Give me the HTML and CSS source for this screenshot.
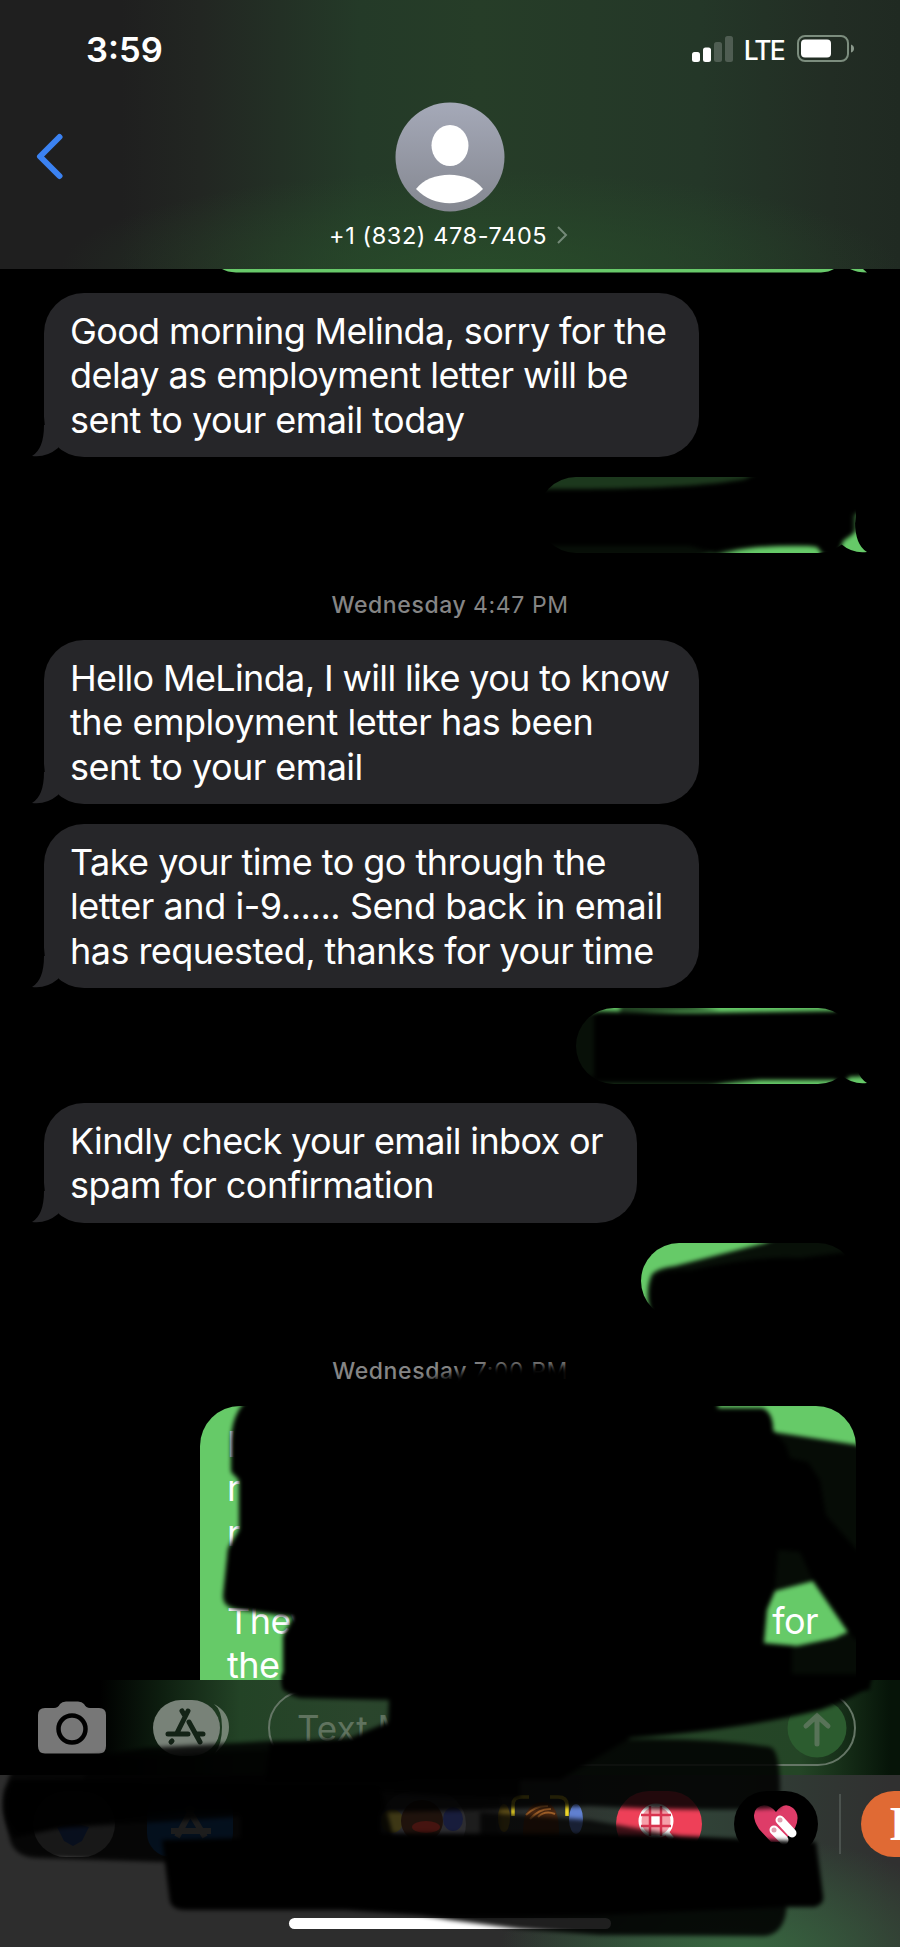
FILE: index.html
```
<!DOCTYPE html>
<html lang="en">
<head>
  <meta charset="UTF-8" />
  <meta name="viewport" content="width=device-width, initial-scale=1" />
  <title>Messages</title>
  <link rel="stylesheet" href="styles.css">
</head>
<body>
  <div class="phone">

    <!-- Header -->
    <header class="header">
      <div class="status">
        <span class="time">3:59</span>
        <div class="status-right">
          <svg width="42" height="28" viewBox="0 0 42 28" fill="#fff">
            <rect x="0" y="17" width="8" height="10" rx="2.5"/>
            <rect x="11" y="12.500" width="8" height="14.500" rx="2.500"/>
            <rect x="22" y="7" width="8" height="20" rx="2.500" opacity=".2"/>
            <rect x="33" y="1" width="8" height="26" rx="2.500" opacity=".2"/>
          </svg>
          <span class="lte">LTE</span>
          <svg width="58" height="28" viewBox="0 0 58 28">
            <rect x="1" y="1" width="50" height="25" rx="7" fill="none" stroke="#7c8d7e" stroke-width="2"/>
            <rect x="4" y="4.500" width="30" height="18" rx="4" fill="#fff"/>
            <path d="M54 9.500q3 1 3 4t-3 4z" fill="#8a988b"/>
          </svg>
        </div>
      </div>
      <div class="contact">
        <svg class="back" width="28" height="48" viewBox="0 0 28 48">
          <path d="M23.500 4 4 23.500 23.500 43" fill="none" stroke="#3b82f2" stroke-width="6" stroke-linecap="round" stroke-linejoin="round"/>
        </svg>
        <svg class="avatar" width="110" height="110" viewBox="0 0 110 110">
          <defs>
            <linearGradient id="av" x1="0" y1="0" x2="0" y2="1">
              <stop offset="0" stop-color="#a5a9b8"/><stop offset="1" stop-color="#848790"/>
            </linearGradient>
          </defs>
          <circle cx="55" cy="55" r="54.500" fill="url(#av)"/>
          <ellipse cx="55" cy="43.500" rx="18.500" ry="20.500" fill="#fff"/>
          <path d="M21 87C35 68 74 68 88 87 70 106 39 106 21 87z" fill="#fff"/>
        </svg>
      </div>
      <div class="number">
        <span>+1 (832) 478-7405</span>
        <svg width="12" height="20" viewBox="0 0 12 20"><path d="M2 2l8 8-8 8" fill="none" stroke="#748a78" stroke-width="2"/></svg>
      </div>
    </header>

    <!-- Conversation -->
    <main class="chat">
      <div class="sent-edge">
        <svg width="650" height="4" viewBox="0 0 650 4" fill="#68c96a">
          <path d="M0 0H612Q607 3 599 3.500H14Q5 3 0 0z"/><path d="M628 0H641L645 3.500Q635 3.500 628 0z"/>
        </svg>
      </div>
      <div class="msg in">
        <span class="tight">Good morning Melinda, sorry for the</span><br>
        <span>delay as employment letter will be</span><br>
        <span>sent to your email today</span>
        <svg class="tail" width="30" height="32" viewBox="0 0 30 32"><path d="M12 0Q12 24 0 31 14 33 26 23L26 0z"/></svg>
      </div>
      <div class="msg out out-a">
        <svg class="tail" width="30" height="32" viewBox="0 0 30 32"><path d="M12 0Q12 24 0 31 14 33 26 23L26 0z"/></svg>
      </div>
      <div class="date">Wednesday <span>4:47 PM</span></div>
      <div class="msg in">
        <span class="tight">Hello MeLinda, I will like you to know</span><br>
        <span class="loose">the employment letter has been</span><br>
        <span>sent to your email</span>
        <svg class="tail" width="30" height="32" viewBox="0 0 30 32"><path d="M12 0Q12 24 0 31 14 33 26 23L26 0z"/></svg>
      </div>
      <div class="msg in">
        <span>Take your time to go through the</span><br>
        <span class="loose">letter and i-9...... Send back in email</span><br>
        <span>has requested, thanks for your time</span>
        <svg class="tail" width="30" height="32" viewBox="0 0 30 32"><path d="M12 0Q12 24 0 31 14 33 26 23L26 0z"/></svg>
      </div>
      <div class="msg out out-b">
        <svg class="tail" width="30" height="32" viewBox="0 0 30 32"><path d="M12 0Q12 24 0 31 14 33 26 23L26 0z"/></svg>
      </div>
      <div class="msg in short">
        <span class="tight">Kindly check your email inbox or</span><br>
        <span>spam for confirmation</span>
        <svg class="tail" width="30" height="32" viewBox="0 0 30 32"><path d="M12 0Q12 24 0 31 14 33 26 23L26 0z"/></svg>
      </div>
      <div class="msg out out-c"></div>
      <div class="date">Wednesday <span>7:00 PM</span></div>
      <div class="msg out out-d">
        <div>I</div>
        <div>r</div>
        <div>r</div>
        <div>&nbsp;</div>
        <div class="row"><span>They</span><span>for</span></div>
        <div>the</div>
      </div>
    </main>

    <!-- Input bar -->
    <div class="composer">
      <svg class="camera" width="68" height="54" viewBox="0 0 68 54">
        <path d="M7 7H16Q20 7 22 3 24 .5 28 .5H40Q44 .5 46 3 48 7 52 7H61Q68 7 68 14V45Q68 52.500 61 52.500H7Q0 52.500 0 45V14Q0 7 7 7z" fill="#777"/>
        <circle cx="34" cy="28" r="13.500" fill="none" stroke="#000" stroke-width="4.500"/>
      </svg>
      <svg class="appstore" width="78" height="58" viewBox="0 0 78 58">
        <path d="M62 5Q77 13 77 28T63 54Q70 45 70 28T62 5z" fill="#748474"/>
        <rect x="1" y="1" width="67" height="56" rx="28" fill="#788278"/>
        <g stroke="#132316" stroke-width="5" stroke-linecap="round">
          <path d="M36 12 25 34M30 12 33 17M37 23 48 43M16 35H36M44 35H51M20 42 19 43"/>
        </g>
      </svg>
      <div class="field">
        <span>Text Message</span>
        <svg width="60" height="60" viewBox="0 0 60 60">
          <circle cx="30" cy="30" r="29.500" fill="#2c5c2f"/>
          <path d="M30 46V18M19 28 30 18 41 28" fill="none" stroke="#587358" stroke-width="5" stroke-linecap="round"/>
        </svg>
      </div>
    </div>

    <!-- App strip -->
    <div class="strip">
      <div class="apps">
        <svg width="82" height="66" viewBox="0 0 82 66"><rect width="82" height="66" rx="33" fill="#aaa"/><path d="M24 36q16-6 32 0l-7 14-9 5-9-5z" fill="#3b6bd0"/></svg>
        <svg width="86" height="66" viewBox="0 0 86 66"><rect width="86" height="66" rx="24" fill="#1c6fce"/><path d="M46 16 30 46M40 16 58 46M24 40H64" stroke="#ccc" stroke-width="6"/></svg>
        <svg class="memoji" width="86" height="66" viewBox="0 0 86 66">
          <rect width="86" height="66" rx="33" fill="#44444a"/>
          <ellipse cx="12" cy="30" rx="11" ry="12" fill="#5e5520"/><ellipse cx="73" cy="28" rx="10" ry="12" fill="#252c5c"/>
          <circle cx="42" cy="30" r="21" fill="#2f1c13"/><ellipse cx="46" cy="36" rx="14" ry="6" fill="#6a1e18"/>
        </svg>
        <svg width="86" height="66" viewBox="0 0 86 66">
          <ellipse cx="6" cy="27" rx="6" ry="14" fill="#68561a"/><ellipse cx="78" cy="28" rx="7" ry="15" fill="#6080d0"/>
          <path d="M25 46Q24 11 45 11 62 11 61 46z" fill="#4a2812"/>
          <path d="M28 24Q38 14 50 15M32 28Q42 17 53 18M40 26Q47 19 57 23" stroke="#a06028" stroke-width="2" fill="none"/>
          <path d="M15 25V14Q15 6 23 6H31M52 6H60Q69 6 69 14V25" fill="none" stroke="#f0d828" stroke-width="3.500"/>
        </svg>
        <svg width="86" height="66" viewBox="0 0 86 66">
          <rect width="86" height="66" rx="33" fill="#ee4058"/>
          <circle cx="40" cy="30" r="16" fill="#f6a0aa" stroke="#fff" stroke-width="3"/>
          <path d="M34 15V45M45 15V45M25 24H55M25 35H55" stroke="#d83450" stroke-width="2.500"/>
          <rect x="35.500" y="25.500" width="8" height="8" fill="#fff"/>
          <path d="M50 41 56 48" stroke="#fff" stroke-width="5"/>
        </svg>
        <svg width="84" height="66" viewBox="0 0 84 66">
          <rect width="84" height="66" rx="33" fill="#000"/>
          <path d="M42 21Q33 10 23 17 16 24 25 38L37 51H49L61 37Q67 24 59 17 50 10 42 21z" fill="#de3c68"/>
          <path d="M46 29 58 42M40 39 50 49" stroke="#fff" stroke-width="9" stroke-linecap="round"/>
          <circle cx="46" cy="29" r="2.500" fill="#e0a0b0"/><circle cx="40" cy="39" r="2.500" fill="#e0a0b0"/>
        </svg>
        <i class="sep"></i>
        <div class="orange">I</div>
      </div>
      <div class="home"></div>
    </div>

    <!-- Marker strokes painted over the conversation -->
    <svg class="ink" width="900" height="1947" viewBox="0 0 900 1947">
      <defs>
        <filter id="soft" x="-5%" y="-20%" width="110%" height="140%"><feGaussianBlur stdDeviation="2"/></filter>
        <filter id="softer" x="-5%" y="-20%" width="110%" height="140%"><feGaussianBlur stdDeviation="3.500"/></filter>
      </defs>
      <!-- first reply -->
      <g filter="url(#soft)">
        <path d="M530 465H870V500L857 515V531L843 539 838 556H824L818 547Q810 545 780 545.500 740 547 715 557H530z" opacity=".72"/>
        <path d="M530 540H740L690 560H530z" opacity=".75"/>
        <path d="M530 489Q690 490 745 479L770 465H875V505L853 515V534L843 541 838 556H824L817 547Q810 545 780 546 735 547 715 553L690 546H530z"/>
      </g>
      <!-- second reply -->
      <g filter="url(#soft)">
        <path d="M570 1016 600 1011 680 1013H835L840 1004H872V1076L848 1077 842 1087 835 1080H760Q740 1082 720 1084H570z" opacity=".92"/>
        <path d="M620 1000H660L720 1010 620 1012zM570 1076H750L700 1090H570z" opacity=".65"/>
        <path d="M594 1014 700 1013 835 1011 842 1004H875V1076H850L842 1086 835 1079H760L700 1080H594z"/>
      </g>
      <!-- third reply -->
      <g filter="url(#soft)">
        <path d="M651 1316Q644 1290 652 1274 658 1268 675 1266L765 1243 780 1236H870V1330H650z" opacity=".92"/>
        <path d="M652 1316Q647 1290 655 1276 664 1269 690 1270 760 1255 800 1258L862 1250V1330H652z"/>
      </g>
      <!-- date -->
      <path d="M405 1386 425 1380 455 1374 490 1366H570V1400H405z" filter="url(#softer)"/>
      <!-- long reply -->
      <g filter="url(#soft)">
        <path fill-rule="evenodd" d="M244 1398H718V1408H762Q773 1411 773 1432L870 1447V1690H283V1637L293 1617 240 1610Q222 1608 223 1595L228 1548 239 1530V1480L231 1472V1440Q232 1415 244 1405zM775 1591 813 1581 848 1632 835 1638 797 1646 764 1643 767 1610z" opacity=".94"/>
        <path d="M244 1398H716V1410H762Q773 1412 773 1430L786 1445 790 1458 808 1462 820 1480 826 1515 857 1550H870V1640H856L848 1632 813 1581 800 1552 778 1550 775 1590 766 1610 763 1644 792 1646V1690H283V1636L294 1617 240 1608Q222 1605 225 1585L228 1550 239 1530V1480L231 1470Q230 1415 244 1403z"/>
      </g>
      <!-- input bar -->
      <g filter="url(#soft)">
        <path d="M282 1674H875L866 1688Q850 1700 820 1710 740 1730 630 1738L560 1780H265L270 1743 350 1738 388 1722 389 1700 300 1698Q282 1694 282 1680z"/>
        <path d="M12 1770 145 1748 270 1741 600 1740Q700 1736 770 1747 780 1750 780 1790V1808Q700 1812 590 1806L480 1810 270 1815 60 1828 14 1838Q0 1820 4 1790z" opacity=".86"/>
        <path d="M10 1780 260 1776 520 1758V1798L440 1796 380 1792 330 1812 180 1812 100 1822 20 1835 8 1820z" opacity=".8"/>
        <path d="M90 1758 270 1750 390 1740 470 1750 400 1785 270 1790H80z" opacity=".6"/>
      </g>
      <!-- app strip -->
      <g filter="url(#soft)">
        <path d="M14 1782Q3 1790 4 1810L10 1840Q15 1858 40 1858L162 1862H400L380 1785z" opacity=".86"/>
        <path d="M240 1790H380V1850H240z"/>
        <path d="M380 1790H500V1840H380z" opacity=".35"/>
        <path d="M480 1812 590 1820 680 1836V1842H480z" opacity=".75"/>
        <path d="M162 1840 240 1838 380 1833 590 1834 680 1836 816 1842 823 1895Q825 1904 815 1907H787L600 1915 450 1917 345 1910H185Q173 1910 170 1902z"/>
        <path d="M330 1900H787Q787 1933 765 1936L600 1935 520 1929 450 1920z" opacity=".88"/>
      </g>
    </svg>
  </div>
</body>
</html>
```
FILE: styles.css
```
* { margin: 0; padding: 0; box-sizing: border-box; }
body {
  background: #000;
  color: #fff;
  font-family: Inter, "Liberation Sans", sans-serif;
}
.phone {
  position: relative;
  width: 900px;
  height: 1947px;
  overflow: hidden;
  display: flex;
  flex-direction: column;
}
.phone > * { flex-shrink: 0; }
svg { display: block; flex-shrink: 0; }
.ink { position: absolute; left: 0; top: 0; }

/* header */
.header {
  height: 269px;
  padding-top: 30px;
  background:
    radial-gradient(ellipse 420px 100px at 480px 270px, rgba(40,76,42,.9), transparent),
    linear-gradient(to right, #1f1f1f 120px, #222622 200px, #243a28 360px, #263d28 480px, #243728 700px, #222d24 830px, #202a22);
}
.status {
  display: flex;
  justify-content: space-between;
  align-items: center;
  height: 38px;
  padding: 0 45px 0 86px;
}
.time { font-size: 34.500px; font-weight: 600; }
.status-right { display: flex; align-items: center; }
.lte { font-size: 26.500px; font-weight: 500; margin: 2px 13px 0 10px; letter-spacing: -1.800px; }
.contact {
  display: flex;
  align-items: center;
  margin-top: 34px;
  padding-left: 36px;
}
.avatar { margin-left: 331px; }
.number {
  display: flex;
  align-items: center;
  gap: 9px;
  height: 46px;
  padding-left: 329px;
  font-size: 23.500px;
  letter-spacing: .6px;
}

/* conversation */
.chat {
  height: 1411px;
  overflow: hidden;
  display: flex;
  flex-direction: column;
  align-items: flex-start;
}
.sent-edge { height: 24px; padding-left: 222px; flex-shrink: 0; }
.msg {
  position: relative;
  flex-shrink: 0;
  border-radius: 40px;
  font-size: 36px;
  line-height: 44.300px;
  letter-spacing: -.55px;
}
.msg span { white-space: nowrap; }
.msg .tight { letter-spacing: -.640px; }
.msg .loose { letter-spacing: -.450px; }
.in {
  width: 655px;
  height: 164px;
  margin: 0 0 20px 44px;
  padding: 16px 26px;
  background: #262629;
}
.short { width: 593px; height: 120px; }
.tail { position: absolute; left: -12px; bottom: 0; fill: #262629; }
.out { align-self: flex-end; margin: 0 44px 20px 0; background: #66ca68; }
.out .tail { left: auto; right: -11px; transform: scaleX(-1); fill: #66ca68; }
.out-a { width: 318px; height: 76px; margin-bottom: 37px; }
.out-b { width: 280px; height: 76px; margin-bottom: 19px; }
.out-c { width: 215px; height: 76px; margin-bottom: 37px; }
.out-d { width: 656px; height: 330px; padding: 16px 27px; }
.row { display: flex; justify-content: space-between; padding-right: 11px; }
.date {
  flex-shrink: 0;
  width: 100%;
  height: 30px;
  margin-bottom: 20px;
  text-align: center;
  font-size: 23px;
  line-height: 30px;
  font-weight: 500;
  letter-spacing: .6px;
  color: #858585;
}
.date span { font-weight: 400; }

/* input bar */
.composer {
  display: flex;
  align-items: center;
  height: 95px;
  padding: 0 44px 0 38px;
  background: linear-gradient(to right, #000 100px, #0d1d0f 160px, #234326 240px, #2a452c 360px, #244526 800px, #061408 890px);
}
.appstore { margin-left: 46px; }
.field {
  display: flex;
  align-items: center;
  justify-content: space-between;
  width: 589px;
  height: 76px;
  margin-left: 38px;
  padding: 0 7px 0 27px;
  border: 2px solid #657666;
  border-radius: 38px;
  font-size: 35px;
  color: #60735f;
}

/* app strip */
.strip {
  height: 172px;
  padding-top: 16px;
  background:
    radial-gradient(ellipse 240px 120px at 740px 180px, #386840, transparent),
    linear-gradient(to right, #2d2d2d 500px, #304237 700px, #303030 890px);
}
.apps { display: flex; gap: 32px; padding-left: 33px; width: 1100px; }
.memoji { margin-left: 115px; }
.sep { width: 2px; height: 60px; margin: 3px -12px 0 -11px; background: #4b524e; flex-shrink: 0; }
.orange {
  width: 90px;
  height: 66px;
  border-radius: 33px;
  background: #e06a34;
  font: bold 48px/66px "Liberation Serif", serif;
  padding-left: 28px;
}
.home { width: 322px; height: 11px; margin: 61px 0 0 289px; border-radius: 6px; background: #fff; }
```
